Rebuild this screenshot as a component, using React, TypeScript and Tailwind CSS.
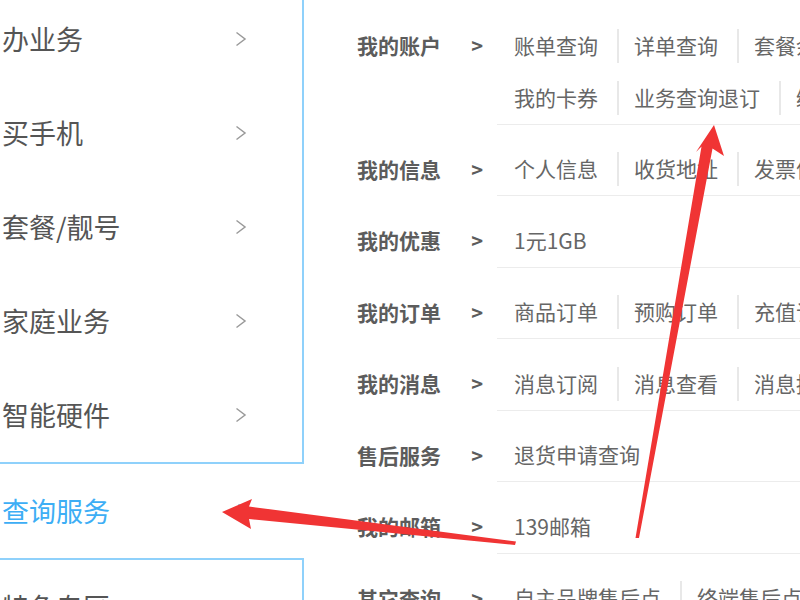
import React from 'react';

const menu = ['办业务', '买手机', '套餐/靓号', '家庭业务', '智能硬件'];

const groups: { label: string; lines: string[][] }[] = [
  {
    label: '我的账户',
    lines: [
      ['账单查询', '详单查询', '套餐余量'],
      ['我的卡券', '业务查询退订', '缴费历史'],
    ],
  },
  { label: '我的信息', lines: [['个人信息', '收货地址', '发票信息']] },
  { label: '我的优惠', lines: [['1元1GB']] },
  { label: '我的订单', lines: [['商品订单', '预购订单', '充值订单']] },
  { label: '我的消息', lines: [['消息订阅', '消息查看', '消息提醒']] },
  { label: '售后服务', lines: [['退货申请查询']] },
  { label: '我的邮箱', lines: [['139邮箱']] },
  { label: '其它查询', lines: [['自主品牌售后点', '终端售后点']] },
];

function Chevron({ className }: { className?: string }) {
  return (
    <svg width="12" height="16" viewBox="0 0 12 16" className={className}>
      <polyline points="1.5,1.5 10,8 1.5,14.5" fill="none" stroke="currentColor" strokeWidth="1.5" />
    </svg>
  );
}

function MenuItem({ text, active }: { text: string; active?: boolean }) {
  return (
    <div
      className={`flex h-[94px] shrink-0 items-center justify-between pl-[2px] pr-[55px] text-[27px] ${
        active ? 'text-[#3daef5]' : 'text-[#555]'
      }`}
    >
      <span>{text}</span>
      <Chevron className={active ? 'text-[#3daef5]' : 'text-[#9a9a9a]'} />
    </div>
  );
}

function Arrows() {
  return (
    <svg className="pointer-events-none absolute inset-0" width="800" height="600" viewBox="0 0 800 600">
      <polygon
        fill="#f03434"
        points="222,512 252,499 249,506.5 516,541.5 515,545 249,519 251,529"
      />
      <polygon
        fill="#f03434"
        points="714,125 724,156 712.5,148.5 639,538 635.5,538 701.5,146.5 696,152"
      />
    </svg>
  );
}

export default function App() {
  return (
    <div
      className="relative flex h-[600px] w-[800px] overflow-hidden bg-white"
      style={{ fontFamily: '"Noto Sans CJK SC", "Noto Sans", sans-serif' }}
    >
      <div className="-mt-[8px] flex w-[304px] shrink-0 flex-col">
        <div className="shrink-0 border-b-2 border-r-2 border-[#8fd1fb]">
          {menu.map((m) => (
            <MenuItem key={m} text={m} />
          ))}
        </div>
        <MenuItem text="查询服务" active />
        <div className="shrink-0 border-r-2 border-t-2 border-[#8fd1fb]">
          <MenuItem text="特色专区" />
        </div>
      </div>

      <div className="mt-[1px] flex min-w-0 flex-1 flex-col pl-[53px]">
        {groups.map((g) => (
          <div key={g.label} className="flex shrink-0">
            <div className="flex h-[52px] w-[140px] shrink-0 translate-y-[18.5px] items-center pr-[14px] text-[21px] font-bold text-[#5c5c5c]">
              <span>{g.label}</span>
              <span className="ml-auto text-[20px]">&gt;</span>
            </div>
            <div className="min-w-0 flex-1 border-b border-[#ececec] pt-[18.5px]">
              {g.lines.map((line, i) => (
                <div key={i} className="flex h-[52px] items-center whitespace-nowrap text-[21px] text-[#666]">
                  {line.map((item, j) => (
                    <React.Fragment key={item}>
                      {j > 0 && <span className="h-[34px] w-[2px] shrink-0 bg-[#e8e8e8]" />}
                      <span className={`shrink-0 pr-[19px] ${j > 0 ? 'pl-[15px]' : 'pl-[17px]'}`}>{item}</span>
                    </React.Fragment>
                  ))}
                </div>
              ))}
            </div>
          </div>
        ))}
      </div>

      <Arrows />
    </div>
  );
}
